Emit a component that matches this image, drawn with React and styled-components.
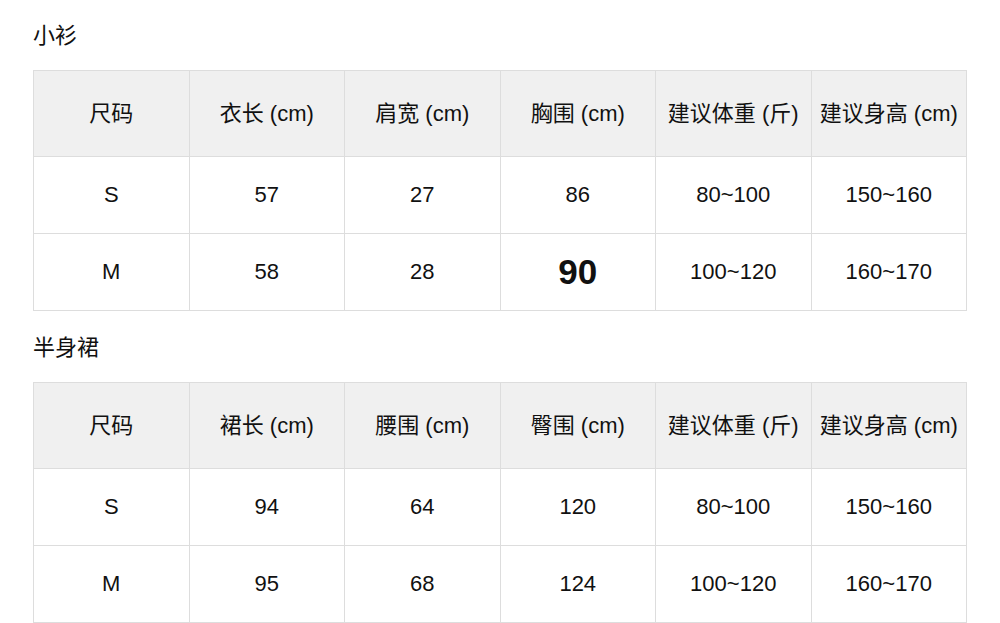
import React from 'react';
import styled, { createGlobalStyle } from 'styled-components';

const GlobalStyle = createGlobalStyle`
  body {
    margin: 0;
    background: #ffffff;
    font-family: "Liberation Sans", "Noto Sans CJK SC", sans-serif;
    color: #111111;
  }
`;

const Page = styled.div`
  padding: 22px 33px 0;
`;

const Title = styled.h3`
  margin: ${(p) => (p.$first ? '0' : '23px')} 0 20px;
  font-size: 22px;
  line-height: 28px;
  font-weight: 400;
`;

const Table = styled.table`
  width: 934px;
  border-collapse: collapse;
  table-layout: fixed;
`;

const HeadCell = styled.th`
  height: 85px;
  padding: 0;
  background: #f0f0f0;
  border: 1px solid #dddddd;
  font-size: 22px;
  font-weight: 400;
  line-height: 26px;
  text-align: center;
  white-space: nowrap;
`;

const Cell = styled.td`
  height: 76px;
  padding: 0;
  border: 1px solid #dddddd;
  font-size: ${(p) => (p.$strong ? '35px' : '22px')};
  font-weight: ${(p) => (p.$strong ? 700 : 400)};
  line-height: 24px;
  text-align: center;
`;

const tables = [
  {
    title: '小衫',
    head: ['尺码', '衣长 (cm)', '肩宽 (cm)', '胸围 (cm)', '建议体重 (斤)', '建议身高 (cm)'],
    rows: [
      ['S', '57', '27', '86', '80~100', '150~160'],
      ['M', '58', '28', '90', '100~120', '160~170'],
    ],
    strong: '1-3',
  },
  {
    title: '半身裙',
    head: ['尺码', '裙长 (cm)', '腰围 (cm)', '臀围 (cm)', '建议体重 (斤)', '建议身高 (cm)'],
    rows: [
      ['S', '94', '64', '120', '80~100', '150~160'],
      ['M', '95', '68', '124', '100~120', '160~170'],
    ],
  },
];

const SizeTable = ({ data, first }) => (
  <section>
    <Title $first={first}>{data.title}</Title>
    <Table>
      <thead>
        <tr>
          {data.head.map((h) => (
            <HeadCell key={h}>{h}</HeadCell>
          ))}
        </tr>
      </thead>
      <tbody>
        {data.rows.map((row, r) => (
          <tr key={r}>
            {row.map((v, c) => (
              <Cell key={c} $strong={data.strong === `${r}-${c}`}>
                {v}
              </Cell>
            ))}
          </tr>
        ))}
      </tbody>
    </Table>
  </section>
);

export default function App() {
  return (
    <>
      <GlobalStyle />
      <Page>
        {tables.map((t, i) => (
          <SizeTable key={t.title} data={t} first={i === 0} />
        ))}
      </Page>
    </>
  );
}
